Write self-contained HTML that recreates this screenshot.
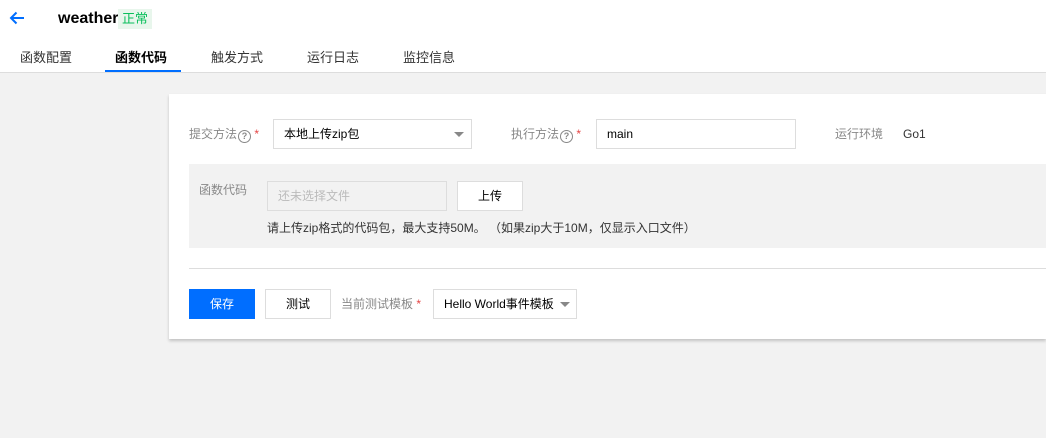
<!DOCTYPE html>
<html><head><meta charset="utf-8"><style>
*{margin:0;padding:0;box-sizing:border-box}
body{width:1046px;height:438px;background:#f2f2f2;font-family:"Liberation Sans","Noto Sans CJK SC",sans-serif;font-size:12px;color:#000;position:relative;overflow:hidden}
.a{position:absolute}
.hdr{left:0;top:0;width:1046px;height:73px;background:#fff;border-bottom:1px solid #ddd}
.tab{top:49px;font-size:13px;color:#333;line-height:18px}
.card{left:169px;top:94px;width:877px;height:245px;background:#fff;box-shadow:0 2px 3px rgba(0,0,0,.2)}
.lbl{color:#888;line-height:18px}
.box{border:1px solid #ddd;background:#fff;line-height:28px;padding-left:10px}
.req{color:#e54545}
.q{display:inline-block;width:13px;height:13px;border:1.3px solid #888;border-radius:50%;font-size:9px;line-height:11px;text-align:center;color:#888;font-weight:bold;vertical-align:-1px;margin-left:1px}
.tri{position:absolute;width:0;height:0;border-left:5px solid transparent;border-right:5px solid transparent;border-top:5px solid #888}
</style></head><body>
<div class="a hdr"></div>
<svg class="a" style="left:8px;top:10px" width="18" height="16" viewBox="0 0 18 16"><path d="M16 8H3M8.5 2.5L3 8l5.5 5.5" stroke="#006eff" stroke-width="2" fill="none"/></svg>
<div class="a" style="left:58px;top:9px;font-size:16px;font-weight:bold;line-height:20px">weather</div>
<div class="a" style="left:118px;top:9px;width:34px;height:20px;background:#e8f6ec;color:#0abf5b;font-size:13px;line-height:20px;text-align:center">正常</div>
<div class="a tab" style="left:20px">函数配置</div>
<div class="a tab" style="left:115px;font-weight:bold;color:#000">函数代码</div>
<div class="a" style="left:105px;top:70px;width:76px;height:2px;background:#006eff"></div>
<div class="a tab" style="left:211px">触发方式</div>
<div class="a tab" style="left:307px">运行日志</div>
<div class="a tab" style="left:403px">监控信息</div>
<div class="a card"></div>
<div class="a lbl" style="left:189px;top:125px">提交方法<span class="q">?</span> <span class="req">*</span></div>
<div class="a box" style="left:273px;top:119px;width:199px;height:30px">本地上传zip包<span class="tri" style="left:180px;top:12px"></span></div>
<div class="a lbl" style="left:511px;top:125px">执行方法<span class="q">?</span> <span class="req">*</span></div>
<div class="a box" style="left:596px;top:119px;width:200px;height:30px">main</div>
<div class="a lbl" style="left:835px;top:125px">运行环境</div>
<div class="a" style="left:903px;top:125px;line-height:18px;color:#333">Go1</div>
<div class="a" style="left:189px;top:164px;width:857px;height:84px;background:#f2f2f2"></div>
<div class="a lbl" style="left:199px;top:181px">函数代码</div>
<div class="a box" style="left:267px;top:181px;width:180px;height:30px;background:#f2f2f2;color:#bbb">还未选择文件</div>
<div class="a box" style="left:457px;top:181px;width:66px;height:30px;padding:0;text-align:center">上传</div>
<div class="a" style="left:267px;top:219px;line-height:18px;color:#333">请上传zip格式的代码包，最大支持50M。 （如果zip大于10M，仅显示入口文件）</div>
<div class="a" style="left:189px;top:268px;width:857px;height:1px;background:#ddd"></div>
<div class="a" style="left:189px;top:289px;width:66px;height:30px;background:#006eff;color:#fff;line-height:30px;text-align:center">保存</div>
<div class="a box" style="left:265px;top:289px;width:66px;height:30px;padding:0;text-align:center">测试</div>
<div class="a lbl" style="left:341px;top:295px">当前测试模板 <span class="req">*</span></div>
<div class="a box" style="left:433px;top:289px;width:144px;height:30px">Hello World事件模板<span class="tri" style="left:126px;top:12px"></span></div>
</body></html>
